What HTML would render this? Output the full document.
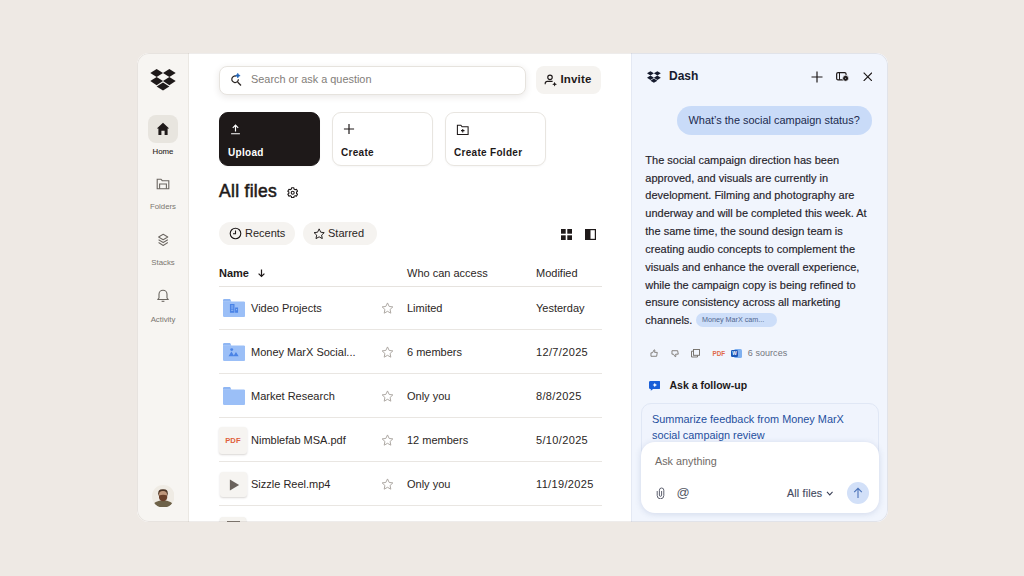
<!DOCTYPE html>
<html lang="en">
<head>
<meta charset="utf-8">
<title>Dropbox Dash</title>
<style>
*{box-sizing:border-box;margin:0;padding:0}
html,body{width:1024px;height:576px;overflow:hidden}
body{background:#eee9e4;font-family:"Liberation Sans",Arial,sans-serif;color:#1e1919;position:relative}
.abs{position:absolute}
#win{position:absolute;left:137px;top:53px;width:751px;height:469px;border-radius:12px;overflow:hidden;background:#fff}
#edge{position:absolute;left:0;top:0;width:751px;height:469px;border-radius:12px;box-shadow:inset 0 0 0 1px rgba(120,110,100,.13);pointer-events:none;z-index:9}
#side{position:absolute;left:0;top:0;width:52px;height:469px;background:#f7f5f2;border-right:1px solid #ebe8e3}
#main{position:absolute;left:52px;top:0;width:442px;height:469px;background:#fff}
#dash{position:absolute;left:494px;top:0;width:257px;height:469px;background:#f1f5fd;border-left:1px solid #e4e9f4}
.t{position:absolute;white-space:nowrap;line-height:1}
.nav{position:absolute;left:0;width:52px;text-align:center;font-size:7.800px;color:#7a7570}
.card{position:absolute;top:59px;width:101px;height:54px;border-radius:9px;border:1px solid #e8e5e0;background:#fff;box-shadow:0 1px 2px rgba(60,50,40,.04)}
.card .t{left:8px;top:35px;font-size:10px;font-weight:700;letter-spacing:.3px}
.chip{position:absolute;top:169px;height:23px;border-radius:12px;background:#f5f3f0}
.row{position:absolute;left:30px;width:383px;height:44px;border-bottom:1px solid #e9e6e2;font-size:11px;color:#2b2624}
.row .t{top:16.500px}
.star{position:absolute;left:161.500px;top:16px}
</style>
</head>
<body>
<div id="win">
  <div id="side">
    <svg class="abs" style="left:13px;top:16px" width="26" height="21.500" viewBox="0 0 26 22"><g fill="#1e1919"><path d="M6.5 0 13 4.1 6.5 8.2 0 4.1z"/><path d="M19.5 0 26 4.1 19.5 8.2 13 4.1z"/><path d="M6.5 8.3 13 12.4 6.5 16.5 0 12.4z"/><path d="M19.5 8.3 26 12.4 19.5 16.5 13 12.4z"/><path d="M13 13.8 19.5 17.9 13 22 6.5 17.9z"/></g></svg>
    <div class="abs" style="left:11px;top:62px;width:30px;height:28px;border-radius:8px;background:#e8e5df"></div>
    <svg class="abs" style="left:19px;top:69px" width="14" height="14" viewBox="0 0 14 14"><path d="M7 .8 13.2 6.4H11.6V13H8.6V8.8H5.4V13H2.4V6.4H.8z" fill="#1e1919"/></svg>
    <div class="nav" style="top:94px;color:#2a2523;-webkit-text-stroke:.1px #2a2523">Home</div>
    <svg class="abs" style="left:19px;top:125px" width="14" height="12" viewBox="0 0 14 12" fill="none" stroke="#6b6661" stroke-width="1.1"><path d="M1.2 10.8V1.2H5l1.2 1.5h6.6v8.1z"/><path d="M3.6 10.8V6h6.8v4.8"/></svg>
    <div class="nav" style="top:149px">Folders</div>
    <svg class="abs" style="left:20px;top:180px" width="12.400" height="14" viewBox="0 0 14 14" preserveAspectRatio="none" fill="none" stroke="#6b6661" stroke-width="1.1" stroke-linejoin="round"><path d="M7 1.2 12.2 4 7 6.8 1.8 4z"/><path d="M1.8 6.8 7 9.6l5.200-2.800"/><path d="M1.800 9.600 7 12.400l5.200-2.800"/></svg>
    <div class="nav" style="top:205px">Stacks</div>
    <svg class="abs" style="left:19px;top:235px" width="14" height="15" viewBox="0 0 14 15" fill="none" stroke="#6b6661" stroke-width="1.1" stroke-linejoin="round"><path d="M3 10V6.200a4 4 0 0 1 8 0V10l1.300 1.500H1.700z"/><path d="M5.600 13.300h2.800"/></svg>
    <div class="nav" style="top:262px">Activity</div>
    <svg class="abs" style="left:14.800px;top:431.500px" width="22.600" height="22.600" viewBox="0 0 22.600 22.600"><defs><clipPath id="avc"><circle cx="11.300" cy="11.300" r="11.300"/></clipPath><filter id="avb" x="-20%" y="-20%" width="140%" height="140%"><feGaussianBlur stdDeviation=".55"/></filter></defs><circle cx="11.300" cy="11.300" r="11.300" fill="#efebe4"/><g clip-path="url(#avc)" filter="url(#avb)"><ellipse cx="11.100" cy="20.200" rx="10.300" ry="4.600" fill="#6e6248"/><rect x="6.200" y="4.200" width="9.600" height="8" rx="4" fill="#4d3626"/><rect x="7" y="6" width="8" height="8" rx="3.600" fill="#bf977b"/><path d="M7 10.600q4.100-1.600 8.200 0v2.400q-1 3.200-4.100 3.200T7 13z" fill="#6a402c"/></g></svg>
  </div>

  <div id="main">
    <!-- search -->
    <div class="abs" style="left:30px;top:12.500px;width:307px;height:29px;border-radius:8px;border:1px solid #e6e3de;background:#fff;box-shadow:0 2px 7px rgba(60,50,40,.11)"></div>
    <svg class="abs" style="left:41px;top:20px" width="14" height="14" viewBox="0 0 14 14" fill="none"><path d="M6.100 3.100A3.300 3.300 0 1 0 8.400 6.200" stroke="#2a2523" stroke-width="1.200"/><path d="M7.600 9 11 12.500" stroke="#2a2523" stroke-width="1.300"/><path d="M7.800 .2l.85 1.550 1.550.85-1.550.85-.85 1.550-.85-1.550-1.550-.85 1.550-.85z" fill="#1f63b8" stroke="#1f63b8" stroke-width=".5" stroke-linejoin="round"/></svg>
    <div class="t" style="left:62px;top:21px;font-size:10.900px;color:#827d79">Search or ask a question</div>
    <!-- invite -->
    <div class="abs" style="left:347.300px;top:12.600px;width:65px;height:28.800px;border-radius:8px;background:#f5f3f0"></div>
    <svg class="abs" style="left:355px;top:19.700px" width="14" height="14" viewBox="0 0 14 14" fill="none" stroke="#1e1919" stroke-width="1.150"><circle cx="6" cy="4.300" r="2.250"/><path d="M1.200 11.300V10.400a2 2 0 0 1 2-2H8.600"/><path d="M10.600 8.800l.7 1.700 1.700.7-1.700.7-.7 1.700-.7-1.700-1.700-.7 1.700-.7z" fill="#1e1919" stroke="none"/></svg>
    <div class="t" style="left:371.500px;top:21.200px;font-size:11.500px;font-weight:700;letter-spacing:.15px;color:#1e1919">Invite</div>

    <!-- cards -->
    <div class="card" style="left:30px;background:#1e1919;border-color:#1e1919;color:#fff">
      <svg class="abs" style="left:10px;top:11px" width="11" height="11" viewBox="0 0 13 13" fill="none" stroke="#fff" stroke-width="1.400"><path d="M6.500 9V1.500M3.300 4.500 6.500 1.400l3.200 3.100M1.300 11.500h10.400"/></svg>
      <div class="t">Upload</div>
    </div>
    <div class="card" style="left:143px">
      <svg class="abs" style="left:10px;top:10px" width="12" height="12" viewBox="0 0 13 13" fill="none" stroke="#1e1919" stroke-width="1.300"><path d="M6.500 1v11M1 6.500h11"/></svg>
      <div class="t">Create</div>
    </div>
    <div class="card" style="left:256px">
      <svg class="abs" style="left:10px;top:11px" width="13.500" height="12" viewBox="0 0 14 13" fill="none" stroke="#1e1919" stroke-width="1.150"><path d="M1.200 11.400V1.400H5l1.200 1.600h6.600v8.400z"/><path d="M7 5.300v3.800M5.100 7.200h3.800"/></svg>
      <div class="t">Create Folder</div>
    </div>

    <!-- heading -->
    <div class="t" style="left:30px;top:130px;font-size:17.500px;font-weight:400;letter-spacing:.3px;-webkit-text-stroke:.55px #1e1919;color:#1e1919">All files</div>
    <svg class="abs" style="left:97.800px;top:134px" width="11.400" height="11.400" viewBox="0 0 11.400 11.400" fill="none" stroke="#1e1919" stroke-width="1.100" stroke-linejoin="round"><circle cx="5.700" cy="5.700" r="1.500"/><path d="M4.550 0.730 6.850 0.730 6.970 2.010 8.260 2.760 9.430 2.220 10.580 4.210 9.530 4.960 9.530 6.440 10.580 7.190 9.430 9.180 8.260 8.640 6.970 9.390 6.850 10.670 4.550 10.670 4.430 9.390 3.140 8.640 1.970 9.180 0.820 7.190 1.870 6.440 1.870 4.960 0.820 4.210 1.970 2.220 3.140 2.760 4.430 2.010z"/></svg>

    <!-- chips -->
    <div class="chip" style="left:30px;width:76px"></div>
    <svg class="abs" style="left:40px;top:174px" width="13" height="13" viewBox="0 0 13 13" fill="none" stroke="#1e1919" stroke-width="1.100"><circle cx="6.500" cy="6.500" r="5.300"/><path d="M6.500 3.400v3.400H4"/></svg>
    <div class="t" style="left:56px;top:175px;font-size:11px;color:#2b2624">Recents</div>
    <div class="chip" style="left:114px;width:74px"></div>
    <svg class="abs" style="left:124px;top:174.800px" width="12.300" height="11.400" viewBox="0 0 14 13" fill="none" stroke="#1e1919" stroke-width="1.100" stroke-linejoin="round"><path d="M7 1l1.800 3.800 4 .5-3 2.800.8 4L7 10.100 3.400 12.100l.8-4-3-2.800 4-.5z"/></svg>
    <div class="t" style="left:139px;top:175px;font-size:11px;color:#2b2624">Starred</div>

    <!-- view toggles -->
    <svg class="abs" style="left:372px;top:175.500px" width="11" height="11" viewBox="0 0 11 11" fill="#1e1919"><rect width="4.700" height="4.700"/><rect x="6.300" width="4.700" height="4.700"/><rect y="6.300" width="4.700" height="4.700"/><rect x="6.300" y="6.300" width="4.700" height="4.700"/></svg>
    <svg class="abs" style="left:395.500px;top:175.500px" width="11" height="11" viewBox="0 0 11 11"><rect x=".6" y=".6" width="9.800" height="9.800" fill="none" stroke="#1e1919" stroke-width="1.200"/><rect x=".6" y=".6" width="4.900" height="9.800" fill="#1e1919"/></svg>

    <!-- table header -->
    <div class="t" style="left:30px;top:214.500px;font-size:11px;font-weight:700;color:#1e1919">Name</div>
    <svg class="abs" style="left:68px;top:215px" width="9" height="10" viewBox="0 0 9 10" fill="none" stroke="#1e1919" stroke-width="1.200"><path d="M4.500 1.500v6.800M1.600 5.600 4.500 8.500l2.900-2.900"/></svg>
    <div class="t" style="left:218px;top:214.500px;font-size:11px;color:#2b2624">Who can access</div>
    <div class="t" style="left:347px;top:214.500px;font-size:11px;color:#2b2624">Modified</div>
    <div class="abs" style="left:30px;top:232.500px;width:383px;height:1px;background:#e6e3df"></div>

    <!-- rows -->
    <div class="row" style="top:233px">
      <svg class="abs" style="left:3.500px;top:12.500px" width="22.200" height="18" viewBox="0 0 22.400 18"><path d="M0 1.200A1.200 1.200 0 0 1 1.200 0H7.200l1.300 2.600H0z" fill="#8fb6f3"/><path d="M0 2.400H21.200a1.200 1.200 0 0 1 1.200 1.200V16.800a1.200 1.200 0 0 1-1.200 1.200H1.200A1.200 1.200 0 0 1 0 16.800z" fill="#9bbff7"/><path d="M7 5h4.600v8.800H7zM12.200 8.600h3v5.200h-3z" fill="#4a83e6"/><path d="M8.200 6.400h2.200v1h-2.200zM8.200 8.600h2.200v1h-2.200zM8.200 10.800h2.200v1h-2.200zM13.200 10h1v1.200h-1z" fill="#9bbff7"/></svg>
      <div class="t" style="left:32px">Video Projects</div>
      <svg class="star" width="13" height="12" viewBox="0 0 14 13" fill="none" stroke="#aba6a1" stroke-width="1.050" stroke-linejoin="round"><path d="M7 1l1.800 3.800 4 .5-3 2.800.8 4L7 10.100 3.400 12.100l.8-4-3-2.800 4-.5z"/></svg>
      <div class="t" style="left:188px">Limited</div>
      <div class="t" style="left:317px">Yesterday</div>
    </div>
    <div class="row" style="top:277px">
      <svg class="abs" style="left:3.500px;top:12.500px" width="22.200" height="18" viewBox="0 0 22.400 18"><path d="M0 1.200A1.200 1.200 0 0 1 1.200 0H7.200l1.300 2.600H0z" fill="#8fb6f3"/><path d="M0 2.400H21.200a1.200 1.200 0 0 1 1.200 1.200V16.800a1.200 1.200 0 0 1-1.200 1.200H1.200A1.200 1.200 0 0 1 0 16.800z" fill="#9bbff7"/><circle cx="8.800" cy="6.600" r="1.500" fill="#4a83e6"/><path d="M5.600 13.200l2.900-4.600 2.900 4.600zM10.400 13.200l2.700-4.200 2.700 4.200z" fill="#4a83e6"/></svg>
      <div class="t" style="left:32px">Money MarX Social...</div>
      <svg class="star" width="13" height="12" viewBox="0 0 14 13" fill="none" stroke="#aba6a1" stroke-width="1.050" stroke-linejoin="round"><path d="M7 1l1.800 3.800 4 .5-3 2.800.8 4L7 10.100 3.400 12.100l.8-4-3-2.800 4-.5z"/></svg>
      <div class="t" style="left:188px">6 members</div>
      <div class="t" style="left:317px;letter-spacing:.35px">12/7/2025</div>
    </div>
    <div class="row" style="top:321px">
      <svg class="abs" style="left:3.500px;top:12.500px" width="22.200" height="18" viewBox="0 0 22.400 18"><path d="M0 1.200A1.200 1.200 0 0 1 1.200 0H7.200l1.300 2.600H0z" fill="#8fb6f3"/><path d="M0 2.400H21.200a1.200 1.200 0 0 1 1.200 1.200V16.800a1.200 1.200 0 0 1-1.200 1.200H1.200A1.200 1.200 0 0 1 0 16.800z" fill="#9bbff7"/></svg>
      <div class="t" style="left:32px">Market Research</div>
      <svg class="star" width="13" height="12" viewBox="0 0 14 13" fill="none" stroke="#aba6a1" stroke-width="1.050" stroke-linejoin="round"><path d="M7 1l1.800 3.800 4 .5-3 2.800.8 4L7 10.100 3.400 12.100l.8-4-3-2.800 4-.5z"/></svg>
      <div class="t" style="left:188px">Only you</div>
      <div class="t" style="left:317px;letter-spacing:.35px">8/8/2025</div>
    </div>
    <div class="row" style="top:365px">
      <div class="abs" style="left:.3px;top:9px;width:28px;height:27px;border-radius:3px;background:#f6f4f1;box-shadow:0 1px 2px rgba(80,70,60,.22)"></div>
      <div class="t" style="left:6.200px;top:18.800px;font-size:7.600px;font-weight:700;letter-spacing:.1px;color:#e0603c">PDF</div>
      <div class="t" style="left:32px">Nimblefab MSA.pdf</div>
      <svg class="star" width="13" height="12" viewBox="0 0 14 13" fill="none" stroke="#aba6a1" stroke-width="1.050" stroke-linejoin="round"><path d="M7 1l1.800 3.800 4 .5-3 2.800.8 4L7 10.100 3.400 12.100l.8-4-3-2.800 4-.5z"/></svg>
      <div class="t" style="left:188px">12 members</div>
      <div class="t" style="left:317px;letter-spacing:.35px">5/10/2025</div>
    </div>
    <div class="row" style="top:409px">
      <div class="abs" style="left:1px;top:10px;width:27px;height:25px;border-radius:3px;background:#f6f4f1;box-shadow:0 1px 2px rgba(80,70,60,.22)"></div>
      <svg class="abs" style="left:9.500px;top:16.500px" width="11" height="12" viewBox="0 0 11 13"><path d="M.5.500 10.500 6.500.5 12.500z" fill="#6a625c"/></svg>
      <div class="t" style="left:32px">Sizzle Reel.mp4</div>
      <svg class="star" width="13" height="12" viewBox="0 0 14 13" fill="none" stroke="#aba6a1" stroke-width="1.050" stroke-linejoin="round"><path d="M7 1l1.800 3.800 4 .5-3 2.800.8 4L7 10.100 3.400 12.100l.8-4-3-2.800 4-.5z"/></svg>
      <div class="t" style="left:188px">Only you</div>
      <div class="t" style="left:317px;letter-spacing:.35px">11/19/2025</div>
    </div>
    <div class="abs" style="left:31px;top:463.500px;width:26px;height:10px;border-radius:3px;background:#f5f3ef;box-shadow:0 1px 1.500px rgba(80,70,60,.35)"></div>
    <div class="abs" style="left:38px;top:467.500px;width:12.500px;height:3px;background:#7a736d"></div>
  </div>

  <div id="dash">
    <svg class="abs" style="left:15.300px;top:18px" width="13.800" height="12" viewBox="0 0 26 22"><g fill="#161b2e"><path d="M6.500 0 13 4.100 6.500 8.200 0 4.100z"/><path d="M19.500 0 26 4.100 19.500 8.200 13 4.100z"/><path d="M6.500 8.300 13 12.400 6.500 16.500 0 12.400z"/><path d="M19.500 8.300 26 12.400 19.500 16.500 13 12.400z"/><path d="M13 13.800 19.500 17.900 13 22 6.500 17.900z"/></g></svg>
    <div class="t" style="left:37px;top:17px;font-size:12px;font-weight:700;color:#161b2e">Dash</div>
    <svg class="abs" style="left:179px;top:18px" width="12" height="12" viewBox="0 0 12 12" fill="none" stroke="#1e1919" stroke-width="1.200"><path d="M6 .5v11M.5 6h11"/></svg>
    <svg class="abs" style="left:204px;top:19px" width="14" height="11" viewBox="0 0 14 11" fill="none" stroke="#1e1919" stroke-width="1.200"><rect x=".65" y=".65" width="9.400" height="7.200" rx="1.400"/><path d="M3.500 .6v7.200" stroke-width="1"/><circle cx="9.600" cy="6.300" r="3" fill="#1e1919" stroke="#f1f5fd" stroke-width=".8"/><circle cx="9.600" cy="6.300" r=".5" fill="#cfd8ea" stroke="none"/></svg>
    <svg class="abs" style="left:230.500px;top:18.800px" width="9.600" height="9.600" viewBox="0 0 10 10" fill="none" stroke="#1e1919" stroke-width="1.200"><path d="M.700 .700 9.300 9.300M9.300 .700.700 9.300"/></svg>

    <div class="abs" style="left:44.500px;top:53px;width:195.500px;height:28.500px;border-radius:14.250px;background:#c9dbf8"></div>
    <div class="t" style="left:56.500px;top:61.500px;font-size:10.950px;color:#1b2a4e">What’s the social campaign status?</div>

    <div class="abs" style="left:13.300px;top:98.700px;width:236px;font-size:11px;line-height:17.850px;color:#25232a;-webkit-text-stroke:.15px #25232a;white-space:nowrap">The social campaign direction has been<br>approved, and visuals are currently in<br>development. Filming and photography are<br>underway and will be completed this week. At<br>the same time, the sound design team is<br>creating audio concepts to complement the<br>visuals and enhance the overall experience,<br>while the campaign copy is being refined to<br>ensure consistency across all marketing<br>channels.</div>
    <div class="abs" style="left:63.500px;top:259.500px;width:81.500px;height:14px;border-radius:7px;background:#cddef9"></div>
    <div class="t" style="left:70px;top:263.300px;font-size:7.200px;color:#51668f">Money MarX cam...</div>

    <!-- feedback row -->
    <svg class="abs" style="left:18px;top:296px" width="8.500" height="8" viewBox="0 0 9 9" fill="none" stroke="#74706b" stroke-width=".95" stroke-linejoin="round"><path d="M.8 4.300h1.700L4.400.9l.9.500-.4 2.400h3L7.200 8.200H.8z"/></svg>
    <svg class="abs" style="left:38.500px;top:296.500px" width="8.500" height="8" viewBox="0 0 9 9" fill="none" stroke="#74706b" stroke-width=".95" stroke-linejoin="round"><path d="M.8 4.700V.8h6.400l.7 3.900h-3l.4 2.400-.9.500L2.500 4.700z"/></svg>
    <svg class="abs" style="left:59px;top:296px" width="9" height="8.500" viewBox="0 0 9 8.500" fill="none" stroke="#74706b" stroke-width=".95"><rect x="2.500" y=".5" width="6" height="5.800"/><path d="M2.500 2.200H.5v5.800h6V6.300"/></svg>
    <div class="t" style="left:80.500px;top:297.500px;font-size:6.300px;font-weight:700;color:#e0694a">PDF</div>
    <div class="abs" style="left:101.500px;top:296px;width:8px;height:8.500px;border-radius:1.500px;background:#7fb0f0"></div>
    <div class="abs" style="left:99.400px;top:297.200px;width:6.400px;height:6.400px;border-radius:1.200px;background:#1c57b8"></div>
    <div class="t" style="left:100.300px;top:298.900px;font-size:4.800px;font-weight:700;color:#fff">W</div>
    <div class="t" style="left:115.800px;top:295.500px;font-size:9px;color:#74767e;letter-spacing:.05px">6 sources</div>

    <!-- follow-up -->
    <svg class="abs" style="left:16.500px;top:327.800px" width="11.600" height="9.800" viewBox="0 0 13 11"><path d="M1.500 0h10A1.500 1.500 0 0 1 13 1.500v6a1.500 1.500 0 0 1-1.500 1.500H4.600L2 11V9h-.5A1.500 1.500 0 0 1 0 7.500v-6A1.500 1.500 0 0 1 1.500 0z" fill="#1a5fd8"/><path d="M6.500 2l.8 1.700 1.700.800-1.700.800-.8 1.700-.8-1.700L4 4.500l1.700-.8z" fill="#fff"/></svg>
    <div class="t" style="left:37.500px;top:327px;font-size:10.500px;font-weight:700;color:#1e1919">Ask a follow-up</div>

    <div class="abs" style="left:9px;top:350px;width:238px;height:60px;border-radius:10px;border:1px solid #e0e7f5;background:#f0f4fd"></div>
    <div class="abs" style="left:20px;top:358px;font-size:10.900px;line-height:16px;color:#1f4f9e;white-space:nowrap">Summarize feedback from Money MarX<br>social campaign review</div>

    <!-- input -->
    <div class="abs" style="left:9px;top:389px;width:238px;height:71px;border-radius:14px;background:#fff;box-shadow:0 1px 6px rgba(60,90,150,.18)"></div>
    <div class="t" style="left:23px;top:403px;font-size:10.800px;color:#6f6a66">Ask anything</div>
    <svg class="abs" style="left:24px;top:434px" width="9" height="12" viewBox="0 0 9 12" fill="none" stroke="#5f6270" stroke-width="1"><path d="M1.200 4v4.500a3.300 3.300 0 0 0 6.600 0V3.200a2.200 2.200 0 0 0-4.400 0v5a1.100 1.100 0 0 0 2.200 0V4"/></svg>
    <div class="t" style="left:44.500px;top:432.500px;font-size:13px;color:#555866">@</div>
    <div class="t" style="left:155px;top:435px;font-size:10.600px;letter-spacing:.2px;color:#454a60;-webkit-text-stroke:.15px #454a60">All files</div>
    <svg class="abs" style="left:193.500px;top:438px" width="7.500" height="5.600" viewBox="0 0 8 6" fill="none" stroke="#3a3f55" stroke-width="1.100"><path d="M1 1l3 3.200L7 1"/></svg>
    <div class="abs" style="left:215px;top:429px;width:22px;height:22px;border-radius:50%;background:#d2e0f8"></div>
    <svg class="abs" style="left:221px;top:434px" width="10" height="12" viewBox="0 0 10 12" fill="none" stroke="#4a72b8" stroke-width="1.100"><path d="M5 11V1.500M1.200 5.200 5 1.400l3.800 3.800"/></svg>
  </div>
  <div id="edge"></div>
</div>
</body>
</html>
